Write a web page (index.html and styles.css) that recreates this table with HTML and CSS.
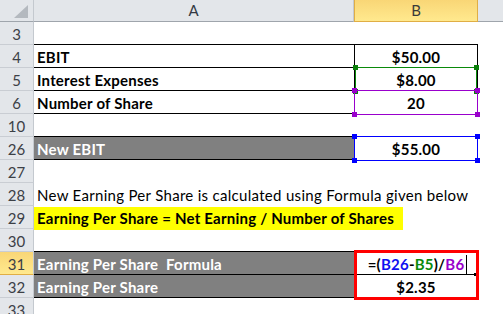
FILE: index.html
```html
<!DOCTYPE html>
<html>
<head>
<meta charset="utf-8">
<link rel="stylesheet" href="styles.css">
</head>
<body>
<div class="sheet">
  <div class="corner"><svg width="14" height="13" viewBox="0 0 14 13"><polygon points="0,13 14,0 14,13" fill="#b4b9bf"/></svg></div>
  <div class="ch">A</div>
  <div class="ch sel">B</div>
  <div class="ch rest"></div>

  <div class="rh">3</div><div class="c line-b"></div><div class="c line-b"></div><div class="c"></div>
  <div class="rh">4</div><div class="c b line-b">EBIT</div><div class="c b num box line-b">$50.00</div><div class="c"></div>
  <div class="rh">5</div><div class="c b line-b">Interest Expenses</div><div class="c b num box line-b"><span class="ref green"><i class="h tl"></i><i class="h tr"></i><i class="h bl"></i><i class="h br"></i></span>$8.00</div><div class="c"></div>
  <div class="rh">6</div><div class="c b line-b">Number of Share</div><div class="c b num"><span class="ref purple"><i class="h tl"></i><i class="h tr"></i><i class="h bl"></i><i class="h br"></i></span>20</div><div class="c"></div>
  <div class="rh">10</div><div class="c line-b"></div><div class="c"></div><div class="c"></div>
  <div class="rh">26</div><div class="c b gray line-b">New EBIT</div><div class="c b num"><span class="ref blue"><i class="h tl"></i><i class="h tr"></i><i class="h bl"></i><i class="h br"></i></span>$55.00</div><div class="c"></div>
  <div class="rh">27</div><div class="c"></div><div class="c"></div><div class="c"></div>
  <div class="rh">28</div><div class="c wide">New Earning Per Share is calculated using Formula given below</div><div class="c"></div>
  <div class="rh">29</div><div class="c wide b"><span class="yellow">Earning Per Share = Net Earning / Number of Shares</span></div><div class="c"></div>
  <div class="rh">30</div><div class="c line-b"></div><div class="c"></div><div class="c"></div>
  <div class="rh selrow">31</div><div class="c b gray line-b">Earning Per Share&nbsp; Formula</div><div class="c b num active"><span class="redbox"></span><span class="formula">=(<span class="f-blue">B26</span>-<span class="f-green">B5</span>)/<span class="f-purple">B6</span><span class="caret"></span></span><span class="fill"></span></div><div class="c"></div>
  <div class="rh">32</div><div class="c b gray line-b">Earning Per Share</div><div class="c b num">$2.35</div><div class="c"></div>
  <div class="rh">33</div><div class="c"></div><div class="c"></div><div class="c"></div>
</div>
</body>
</html>
```
FILE: styles.css
```css
* { box-sizing: border-box; }
body {
  margin: 0;
  background: #ffffff;
  font-family: "Lato", "Open Sans", sans-serif;
  font-size: 15px;
  color: #000;
}
.sheet {
  display: grid;
  grid-template-columns: 34px 320px 124px 1fr;
  grid-template-rows: 22px repeat(13, 23px);
  width: 503px;
  height: 314px;
  overflow: hidden;
}
.corner {
  background: #e3e6ea;
  border-right: 1px solid #c4c9cf;
  border-bottom: 1px solid #9fa5ac;
  display: flex;
  align-items: flex-end;
  justify-content: flex-end;
  padding: 0 5px 3px 0;
}
.corner svg { display: block; }
.ch {
  background: #e3e6ea;
  border-right: 1px solid #c4c9cf;
  border-bottom: 1px solid #9fa5ac;
  color: #333a44;
  text-align: center;
  line-height: 21px;
  font-size: 15px;
}
.ch.sel {
  background: linear-gradient(#f9d676, #ffe98e);
  border: 1px solid #e0ae45;
  border-top: 0;
  color: #3a3a3a;
}
.ch.rest { border-right: 0; }
.rh {
  background: #e3e6ea;
  border-right: 1px solid #c4c9cf;
  border-bottom: 1px solid #c9cdd3;
  color: #3c4046;
  text-align: center;
  line-height: 23px;
  font-size: 15px;
  padding-top: 1px;
}
.rh.selrow {
  background: linear-gradient(#f9d676, #ffe98e);
  border-bottom: 1px solid #e0ae45;
}
.c {
  position: relative;
  line-height: 22px;
  padding: 1px 0 0 3px;
  white-space: nowrap;
  letter-spacing: 0.3px;
}
.c.wide { grid-column: span 2; overflow: visible; }
.b { font-weight: 700; letter-spacing: 0.22px; }
.num { text-align: center; padding-left: 0; }
.line-b { border-bottom: 1px solid #000; }
.box { border-left: 1px solid #000; border-right: 1px solid #000; }
.gray { background: #808080; color: #ffffff; }
.yellow {
  display: inline-block;
  background: #ffff00;
  margin-left: -3px;
  padding: 0 9px 0 3px;
  height: 23px;
}

.ref {
  position: absolute;
  left: 0;
  top: -1px;
  right: 0;
  bottom: -1px;
  border: 1.5px solid;
}
.ref.green { border-color: #0a8a0a; }
.ref.purple { border-color: #9900cc; }
.ref.blue { border-color: #0000ff; }
.h {
  position: absolute;
  width: 5px;
  height: 5px;
}
.ref.green .h { background: #0a7f0a; }
.ref.purple .h { background: #9900cc; }
.ref.blue .h { background: #0000ff; }
.tl { left: -3px; top: -3px; }
.tr { right: -3px; top: -3px; }
.bl { left: -3px; bottom: -3px; }
.br { right: -3px; bottom: -3px; }
.ref.green .bl, .ref.green .br { bottom: -4px; }

.active { border-bottom: 1px solid #000; }
.redbox {
  position: absolute;
  left: 0;
  top: -2px;
  width: 125px;
  height: 50px;
  border: 3px solid #ff0000;
  z-index: 2;
}
.formula { position: relative; }
.f-blue { color: #1010f0; }
.f-green { color: #0a8a0a; }
.f-purple { color: #9900cc; }
.caret {
  position: absolute;
  right: -3px;
  top: 0px;
  width: 1px;
  height: 20px;
  background: #000;
}
.fill {
  position: absolute;
  right: 1px;
  bottom: -2px;
  width: 3px;
  height: 3px;
  background: #000;
}
```
